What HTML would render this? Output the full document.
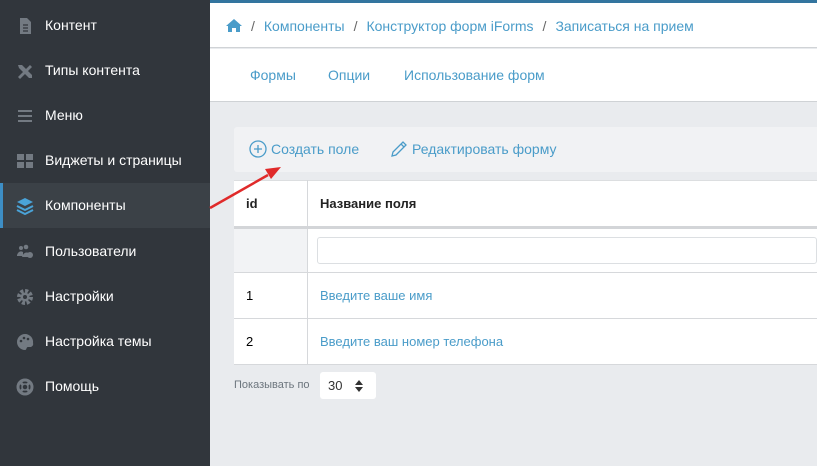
<!DOCTYPE html>
<html><head><meta charset="utf-8"><style>
*{box-sizing:border-box;margin:0;padding:0}
body{width:817px;height:466px;overflow:hidden;font-family:"Liberation Sans","DejaVu Sans",sans-serif;background:#e9ebee;position:relative}
.sb{position:absolute;left:0;top:0;width:210px;height:466px;background:#31363c}
.it{position:absolute;left:0;width:210px;height:45px;color:#fff;font-size:14px;line-height:45px;padding-left:45px}
.it.act{background:#3b4147;border-left:3px solid #3d8ec5;padding-left:42px}
.ic{position:absolute;left:16px;top:14px;width:18px;height:18px}
.act .ic{left:13px}
.top{position:absolute;left:210px;top:0;width:607px;height:3px;background:#33759f}
.bc{position:absolute;left:210px;top:3px;width:607px;height:45px;background:#fff;border-bottom:1px solid #d0d3d6;font-size:14px;color:#4a9cc9;line-height:47px;padding-left:16px}
.bc .s{color:#666;margin:0 9px}
.tabs{position:absolute;left:210px;top:49px;width:607px;height:53px;background:#fff;border-bottom:1px solid #cfd2d5;font-size:14px;color:#4a9cc9;line-height:53px}
.tabs span{position:absolute}
.tb{position:absolute;left:234px;top:127px;width:583px;height:45px;background:#f1f2f4;border-radius:3px 0 0 3px;font-size:14px;color:#4a9cc9;line-height:45px}
table{position:absolute;left:234px;top:180px;width:583px;border-collapse:collapse;font-size:13px;background:#fff}
td{border:1px solid #d6d8db;border-left:none;border-right:none;height:46px;padding-left:12px}
td:first-child{width:74px;border-right:1px solid #d6d8db}
.h td{font-weight:bold;color:#222;height:47px;border-top:1px solid #dcdee0;border-bottom:3px solid #d3d5d8}
.f td{height:45px;background:#fff}
.f td:first-child{background:#f2f3f5}
.inp{width:500px;height:27px;border:1px solid #dcdfe2;border-radius:3px;background:#fff;margin-left:-3px}
a{color:#4a9cc9;text-decoration:none}
.pg{position:absolute;left:234px;top:373px;font-size:11px;color:#6c757d;line-height:24px}
.sel{position:absolute;left:320px;top:372px;width:56px;height:27px;background:#fff;border-radius:3px;font-size:13px;color:#333;line-height:27px;padding-left:8px}
</style></head><body>
<div class="sb">
<div class="it" style="top:3px"><svg class="ic" viewBox="0 0 18 18"><path d="M4 1h7l4 4v12H4z" fill="#737a82"/><path d="M7 8h5M7 11h5M7 14h5" stroke="#31363c" stroke-width="1.3"/></svg>Контент</div>
<div class="it" style="top:48px"><svg class="ic" viewBox="0 0 18 18"><path d="M2 15L14 3l2 2L4 17z M2 3l4 0 10 10 0 3-3 0L3 6z" fill="#737a82"/></svg>Типы контента</div>
<div class="it" style="top:93px"><svg class="ic" viewBox="0 0 18 18"><path d="M2 4h14M2 9h14M2 14h14" stroke="#737a82" stroke-width="2"/></svg>Меню</div>
<div class="it" style="top:138px"><svg class="ic" viewBox="0 0 18 18"><path d="M1 2h7v6H1zM10 2h7v6h-7zM1 10h7v6H1zM10 10h7v6h-7z" fill="#737a82"/></svg>Виджеты и страницы</div>
<div class="it act" style="top:183px"><svg class="ic" viewBox="0 0 18 18"><path d="M9 1l8 4-8 4-8-4z" fill="#4aa3d8"/><path d="M1 9l8 4 8-4M1 13l8 4 8-4" stroke="#4aa3d8" stroke-width="2" fill="none"/></svg>Компоненты</div>
<div class="it" style="top:229px"><svg class="ic" viewBox="0 0 18 18"><circle cx="5" cy="5" r="2" fill="#737a82"/><circle cx="10" cy="4" r="2.3" fill="#737a82"/><path d="M1 12q2-5 6-3v4H1zM6 14q2-6 7-4l-1 4z" fill="#737a82"/><circle cx="14" cy="12" r="3" fill="#737a82"/></svg>Пользователи</div>
<div class="it" style="top:274px"><svg class="ic" viewBox="0 0 18 18"><circle cx="9" cy="9" r="6" fill="none" stroke="#737a82" stroke-width="4" stroke-dasharray="3 1.7"/><circle cx="9" cy="9" r="4.5" fill="#737a82"/><circle cx="9" cy="9" r="2" fill="#31363c"/></svg>Настройки</div>
<div class="it" style="top:319px"><svg class="ic" viewBox="0 0 18 18"><path d="M9 1a8 8 0 1 0 0 16c2 0 1-3 3-3h2a3 3 0 0 0 3-4A8 8 0 0 0 9 1z" fill="#737a82"/><circle cx="5" cy="8" r="1.3" fill="#31363c"/><circle cx="8" cy="5" r="1.3" fill="#31363c"/><circle cx="12" cy="6" r="1.3" fill="#31363c"/></svg>Настройка темы</div>
<div class="it" style="top:364px"><svg class="ic" viewBox="0 0 18 18"><circle cx="9" cy="9" r="7" fill="none" stroke="#737a82" stroke-width="3"/><circle cx="9" cy="9" r="3" fill="none" stroke="#737a82" stroke-width="1.5"/><path d="M4 4l3 3M14 4l-3 3M4 14l3-3M14 14l-3-3" stroke="#737a82" stroke-width="3"/></svg>Помощь</div>
</div>
<div class="top"></div>
<div class="bc"><svg width="16" height="13" viewBox="0 0 16 13" style="vertical-align:-1px"><path d="M8 0L0 7h2v6h4V9h4v4h4V7h2z" fill="#4a9cc9"/></svg><span class="s">/</span>Компоненты<span class="s">/</span>Конструктор форм iForms<span class="s">/</span>Записаться на прием</div>
<div class="tabs"><span style="left:40px">Формы</span><span style="left:118px">Опции</span><span style="left:194px">Использование форм</span></div>
<div class="tb"><svg width="18" height="18" viewBox="0 0 18 18" style="position:absolute;left:15px;top:13px"><circle cx="9" cy="9" r="8" fill="none" stroke="#4a9cc9" stroke-width="1.3"/><path d="M9 5v8M5 9h8" stroke="#4a9cc9" stroke-width="1.3"/></svg><span style="position:absolute;left:37px">Создать поле</span>
<svg width="18" height="18" viewBox="0 0 18 18" style="position:absolute;left:156px;top:13px"><path d="M2 16l1-4L13 2l3 3L6 15z M11 4l3 3" fill="none" stroke="#4a9cc9" stroke-width="1.3"/></svg><span style="position:absolute;left:178px">Редактировать форму</span></div>
<table>
<tr class="h"><td>id</td><td>Название поля</td></tr>
<tr class="f"><td></td><td><div class="inp"></div></td></tr>
<tr><td>1</td><td><a>Введите ваше имя</a></td></tr>
<tr><td>2</td><td><a>Введите ваш номер телефона</a></td></tr>
</table>
<div class="pg">Показывать по</div>
<div class="sel">30<svg width="8" height="12" viewBox="0 0 8 12" style="position:absolute;left:35px;top:8px"><path d="M0 5l4-5 4 5zM0 7l4 5 4-5z" fill="#333"/></svg></div>
<svg width="817" height="466" style="position:absolute;left:0;top:0;pointer-events:none"><line x1="210" y1="208" x2="268" y2="175" stroke="#e02a2a" stroke-width="2.5"/><path d="M281 167l-16 2 6 10z" fill="#e02a2a"/></svg>
</body></html>
